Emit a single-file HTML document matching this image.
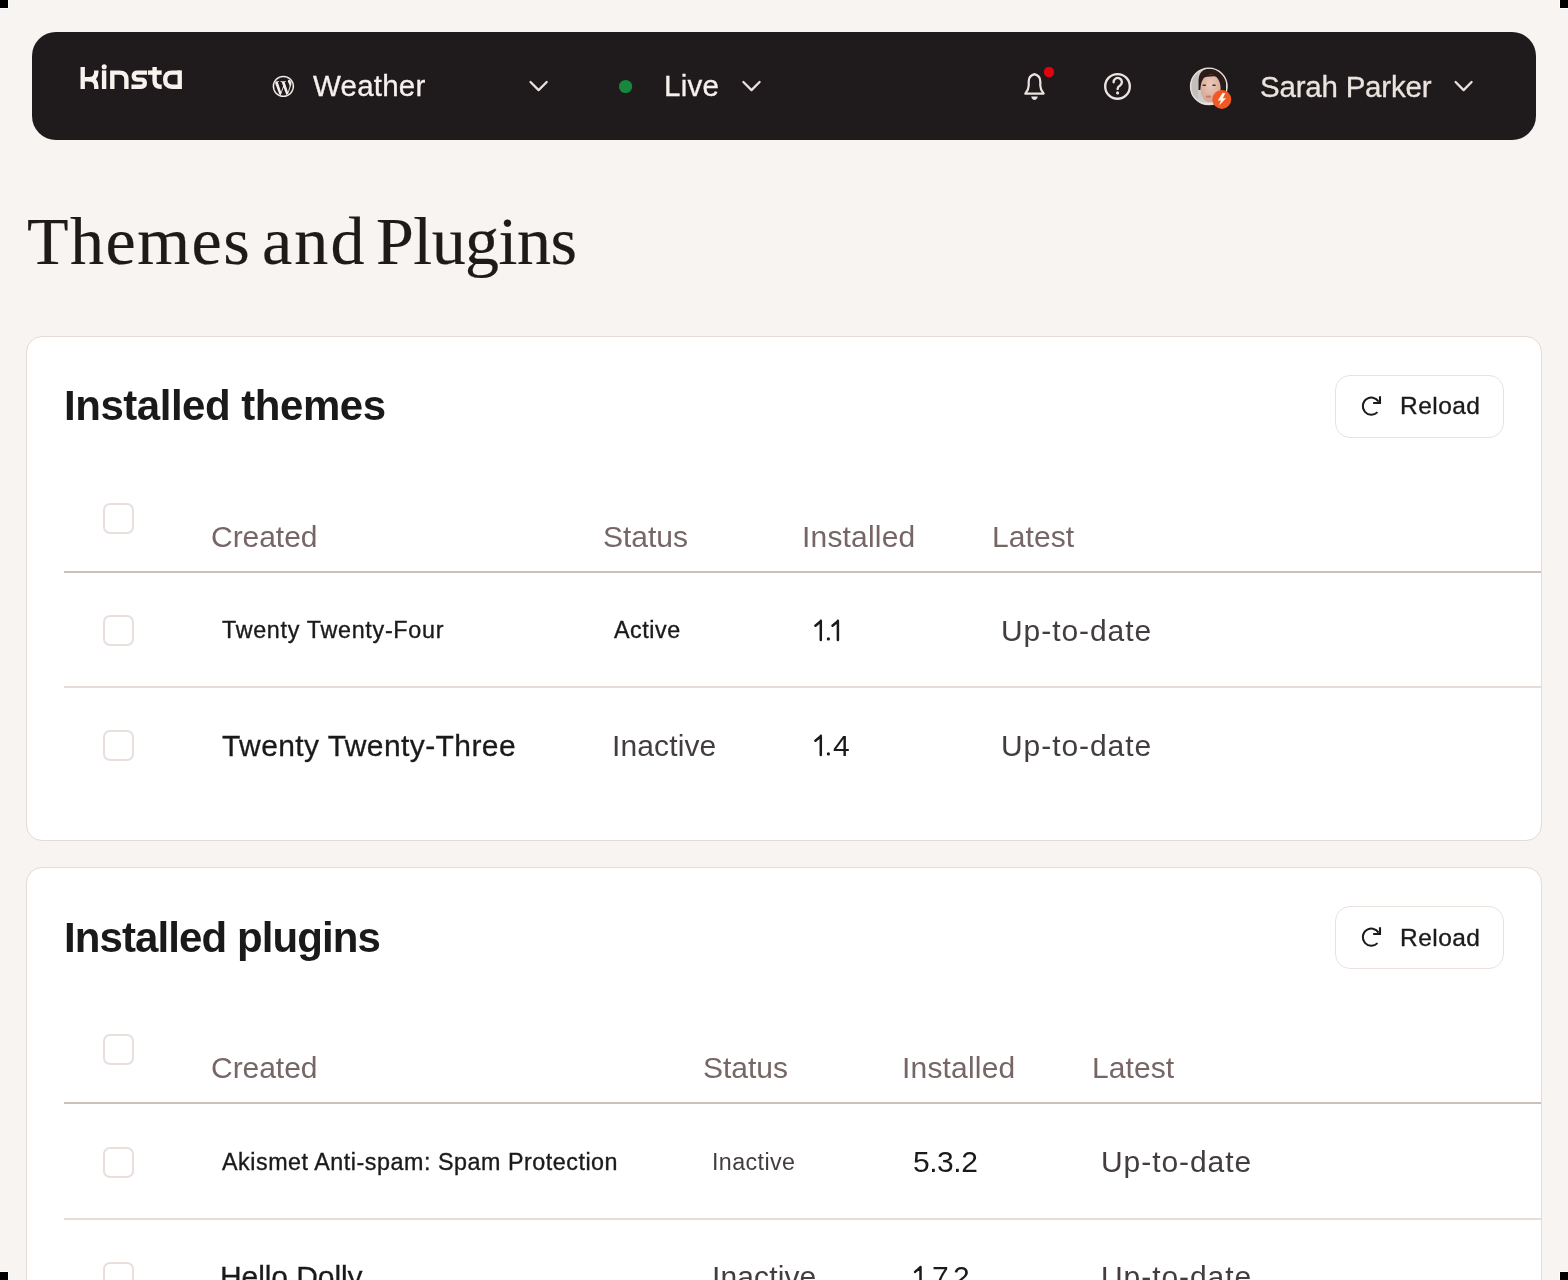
<!DOCTYPE html>
<html>
<head>
<meta charset="utf-8">
<style>
html,body{margin:0;padding:0;}
body{width:1568px;height:1280px;overflow:hidden;position:relative;background:#f8f4f1;font-family:"Liberation Sans",sans-serif;}
.a{position:absolute;}
.t{position:absolute;line-height:1;white-space:nowrap;will-change:transform;}
.nav{left:32px;top:32px;width:1504px;height:108px;border-radius:24px;background:#1f1b1c;}
.card{background:#fff;border:1px solid #e4dbd7;border-radius:16px;box-sizing:border-box;}
.cb{width:31px;height:31px;box-sizing:border-box;border:2px solid #e8dfdb;border-radius:7px;background:#fff;}
.hl{height:2px;background:#cdbfba;}
.rl{height:2px;background:#e6dbd6;}
.h{font-size:28px;color:#6f6161;}
.btn{width:169px;height:63px;box-sizing:border-box;border:1.5px solid #ebe1dd;border-radius:15px;background:#fff;}
.mark{position:absolute;width:8px;height:8px;background:#000;}
</style>
</head>
<body>
<!-- corner marks -->
<div class="mark" style="left:0;top:0;box-shadow:1px 1px 0 #fff"></div>
<div class="mark" style="right:0;top:0;box-shadow:-1px 1px 0 #fff"></div>
<div class="mark" style="left:0;bottom:0;box-shadow:1px -1px 0 #fff"></div>
<div class="mark" style="right:0;bottom:0;box-shadow:-1px -1px 0 #fff"></div>

<!-- NAV -->
<div class="a nav"></div>
<svg class="a" style="left:0;top:0" width="1568" height="140" viewBox="0 0 1568 140">
  <!-- kinsta logo -->
  <g fill="#f8f2ef" stroke="none">
    <rect x="80.5" y="67" width="4.4" height="22"/>
    <rect x="101.9" y="70.4" width="4.4" height="18.6"/>
    <circle cx="104.2" cy="66.7" r="2.55"/>
    <rect x="177.5" y="70.4" width="4.4" height="18.6"/>
  </g>
  <g fill="none" stroke="#f8f2ef" stroke-width="4.4" stroke-linecap="butt">
    <path d="M96.3 70.4 V71.8 Q96.3 79.2 89 79.2 H84.5"/>
    <path d="M88.5 79.2 H89 Q96.3 79.2 96.3 86.5 V89"/>
    <path d="M112.3 89 V72.6 H119.6 Q126.4 72.6 126.4 79.4 V89"/>
    <path d="M147.1 72.6 H137.5 Q133.8 72.6 133.8 76.1 Q133.8 79.6 137.5 79.6 H141.1 Q144.8 79.6 144.8 83.1 Q144.8 86.7 141.1 86.7 H131.4"/>
    <path d="M154.6 67 V80.7 Q154.6 86.7 160.6 86.7 H161.7"/>
    <path d="M148 72.6 H161.7"/>
    <path d="M179.7 72.6 H172 Q165.2 72.6 165.2 79.6 Q165.2 86.7 172 86.7 H179.7"/>
  </g>
  <!-- wordpress icon -->
  <g transform="translate(272.7 75.7) scale(0.17426)"><circle cx="61.26" cy="61.26" r="52.3" fill="#f3eeeb"/><g fill="#1f1b1c">
<path d="M8.708 61.26c0 20.802 12.089 38.779 29.619 47.298L13.258 39.872a52.354 52.354 0 0 0-4.55 21.388z"/>
<path d="M96.74 58.608c0-6.495-2.333-10.993-4.334-14.494-2.664-4.329-5.161-7.995-5.161-12.324 0-4.831 3.664-9.328 8.825-9.328.233 0 .454.029.681.042-9.350-8.566-21.807-13.796-35.489-13.796-18.360 0-34.513 9.420-43.910 23.688 1.233.037 2.395.063 3.382.063 5.497 0 14.006-.667 14.006-.667 2.833-.167 3.167 3.994.337 4.329 0 0-2.847.335-6.015.501L48.2 93.547l11.501-34.493-8.188-22.434c-2.830-.166-5.511-.501-5.511-.501-2.832-.166-2.500-4.496.332-4.329 0 0 8.679.667 13.843.667 5.496 0 14.006-.667 14.006-.667 2.835-.167 3.168 3.994.337 4.329 0 0-2.853.335-6.015.501l18.992 56.494 5.242-17.517c2.272-7.269 4.001-12.490 4.001-16.989z"/>
<path d="M62.184 65.857l-15.768 45.819a52.552 52.552 0 0 0 14.846 2.141c6.120 0 11.989-1.058 17.452-2.979a4.615 4.615 0 0 1-.374-.724L62.184 65.857z"/>
<path d="M107.376 36.046a40.350 40.350 0 0 1 .354 5.400c0 5.333-.996 11.328-3.996 18.824l-16.053 46.413c15.624-9.111 26.133-26.038 26.133-45.426.001-9.137-2.333-17.729-6.438-25.211z"/>

</g></g>
  <circle cx="283.37" cy="86.37" r="10.05" fill="none" stroke="#f3eeeb" stroke-width="1.35"/>
  <!-- chevrons -->
  <g fill="none" stroke="#e9e1dd" stroke-width="2.3" stroke-linecap="round" stroke-linejoin="round">
    <path d="M530.5 82 L538.6 90.1 L546.7 82"/>
    <path d="M743.4 82 L751.5 90.1 L759.6 82"/>
    <path d="M1455.6 82 L1463.6 90.1 L1471.6 82"/>
  </g>
  <!-- live dot -->
  <circle cx="625.6" cy="86.5" r="6.6" fill="#16873c"/>
  <!-- bell -->
  <g fill="none" stroke="#ece4e0" stroke-width="2.2" stroke-linejoin="round" stroke-linecap="round">
    <path d="M1025.3 93.6 H1043.7 Q1040.3 89.6 1040.3 85.8 V81.6 Q1040.3 75.6 1034.5 74.1 Q1028.7 75.6 1028.7 81.6 V85.8 Q1028.7 89.6 1025.3 93.6 Z"/>
  </g>
  <path d="M1031.2 96.6 H1037.8 Q1037.0 100.0 1034.5 100.0 Q1032.0 100.0 1031.2 96.6 Z" fill="#ece4e0"/>
  <circle cx="1049" cy="72" r="5.15" fill="#e1040e"/>
  <!-- help -->
  <circle cx="1117.5" cy="86.4" r="12.3" fill="none" stroke="#ece4e0" stroke-width="2.35"/>
  <path d="M1113.6 82.3 A4.15 4.15 0 1 1 1120.1 85.5 Q1117.6 86.8 1117.6 88.9" fill="none" stroke="#ece4e0" stroke-width="2.35" stroke-linecap="round"/>
  <circle cx="1117.6" cy="92.9" r="1.55" fill="#ece4e0"/>
  <!-- avatar -->
  <defs>
    <clipPath id="av"><circle cx="1208.8" cy="86.4" r="18.3"/></clipPath>
    <radialGradient id="skin" cx="0.5" cy="0.35" r="0.6">
      <stop offset="0" stop-color="#ecc9bb"/>
      <stop offset="1" stop-color="#d7a797"/>
    </radialGradient>
  </defs>
  <g clip-path="url(#av)">
    <rect x="1189" y="67" width="40" height="40" fill="#cfcbc8"/>
    <rect x="1189" y="67" width="9" height="40" fill="#c2bebb"/>
    <path d="M1198.5 90 V80 Q1199 68.5 1211 68.5 Q1226 68.5 1226 82 V94 L1220 94 Q1221 80 1211 76 Q1202 77.5 1201 86 L1200.5 90 Z" fill="#2b1c18"/>
    <ellipse cx="1210.6" cy="88.6" rx="10" ry="14.2" fill="url(#skin)"/>
    <path d="M1200 77.5 Q1206 73.5 1212 74.5 Q1219 74 1222 79 Q1218 75.5 1211 76.6 Q1204 76.5 1200 80 Z" fill="#2b1c18"/>
    <rect x="1202.5" y="84.6" width="3.6" height="1.3" rx="0.6" fill="#4a3530"/>
    <rect x="1212.2" y="84.6" width="3.6" height="1.3" rx="0.6" fill="#4a3530"/>
    <ellipse cx="1208.5" cy="96.6" rx="2.9" ry="1.2" fill="#c57a72"/>
    <rect x="1196" y="102.5" width="26" height="6" fill="#e9e2de"/>
  </g>
  <circle cx="1208.8" cy="86.4" r="18.25" fill="none" stroke="#e6e0dd" stroke-width="1.4"/>
  <circle cx="1221.8" cy="99.4" r="9.5" fill="#f05a22"/>
  <path d="M1222.6 93.0 L1217.8 100.4 H1220.9 L1219.1 105.4 L1226.0 98.3 H1222.9 L1225.3 93.0 Z" fill="#fff6f0"/>
</svg>

<!-- TITLE -->

<!-- CARD 1 -->
<div class="a card" style="left:26px;top:336px;width:1516px;height:505px"></div>
<div class="a btn" style="left:1335px;top:375px"></div>
<svg class="a" style="left:1356px;top:392px" width="30" height="28" viewBox="1356 392 30 28">
  <path d="M1378.6 401.6 A8.55 8.55 0 1 0 1377.5 412.1" fill="none" stroke="#1b1a1a" stroke-width="2"/>
  <path d="M1374.2 403.05 H1380 V397.4" fill="none" stroke="#1b1a1a" stroke-width="2.1" stroke-linecap="square"/>
</svg>

<div class="a cb" style="left:103px;top:502.5px"></div>
<div class="a hl" style="left:64px;top:571px;width:1477px"></div>

<div class="a cb" style="left:103px;top:615px"></div>
<div class="a rl" style="left:64px;top:686px;width:1477px"></div>

<div class="a cb" style="left:103px;top:730px"></div>

<!-- CARD 2 -->
<div class="a card" style="left:26px;top:867px;width:1516px;height:440px"></div>
<div class="a btn" style="left:1335px;top:906px"></div>
<svg class="a" style="left:1356px;top:923px" width="30" height="28" viewBox="1356 392 30 28">
  <path d="M1378.6 401.6 A8.55 8.55 0 1 0 1377.5 412.1" fill="none" stroke="#1b1a1a" stroke-width="2"/>
  <path d="M1374.2 403.05 H1380 V397.4" fill="none" stroke="#1b1a1a" stroke-width="2.1" stroke-linecap="square"/>
</svg>

<div class="a cb" style="left:103px;top:1034px"></div>
<div class="a hl" style="left:64px;top:1102px;width:1477px"></div>

<div class="a cb" style="left:103px;top:1146.5px"></div>
<div class="a rl" style="left:64px;top:1217.5px;width:1477px"></div>

<div class="a cb" style="left:103px;top:1261.5px"></div>
<div class="t" style="left:312.58px;top:71.00px;font-size:29.5px;color:#f6f1ee;letter-spacing:0.22px;-webkit-text-stroke:0.3px #f6f1ee;">Weather</div>
<div class="t" style="left:663.62px;top:71.00px;font-size:29.5px;color:#f6f1ee;letter-spacing:0.27px;-webkit-text-stroke:0.3px #f6f1ee;">Live</div>
<div class="t" style="left:1260.12px;top:72.00px;font-size:29.5px;color:#ebe3de;letter-spacing:-0.21px;-webkit-text-stroke:0.3px #ebe3de;">Sarah Parker</div>
<div class="t" style="left:26.73px;top:207.00px;font-size:68px;color:#1d1a1a;letter-spacing:1.5px;font-family:'Liberation Serif',serif;-webkit-text-stroke:0.2px #1d1a1a;">Themes</div>
<div class="t" style="left:262.09px;top:207.00px;font-size:68px;color:#1d1a1a;letter-spacing:2.15px;font-family:'Liberation Serif',serif;-webkit-text-stroke:0.2px #1d1a1a;">and</div>
<div class="t" style="left:376.40px;top:207.00px;font-size:68px;color:#1d1a1a;letter-spacing:-0.53px;font-family:'Liberation Serif',serif;-webkit-text-stroke:0.2px #1d1a1a;">Plugins</div>
<div class="t" style="left:64.05px;top:385.00px;font-size:42px;color:#1b1a1a;letter-spacing:-0.47px;font-weight:bold;">Installed themes</div>
<div class="t" style="left:1400.06px;top:394.00px;font-size:24.5px;color:#1b1a1a;letter-spacing:0.46px;-webkit-text-stroke:0.35px #1b1a1a;">Reload</div>
<div class="t" style="left:211.10px;top:522.00px;font-size:30px;color:#766666;letter-spacing:-0.04px;">Created</div>
<div class="t" style="left:603.12px;top:522.00px;font-size:30px;color:#766666;">Status</div>
<div class="t" style="left:801.75px;top:522.00px;font-size:30px;color:#766666;letter-spacing:0.19px;">Installed</div>
<div class="t" style="left:991.70px;top:522.00px;font-size:30px;color:#766666;letter-spacing:0.08px;">Latest</div>
<div class="t" style="left:64.05px;top:917.00px;font-size:42px;color:#1b1a1a;letter-spacing:-0.9px;font-weight:bold;">Installed plugins</div>
<div class="t" style="left:1400.06px;top:926.00px;font-size:24.5px;color:#1b1a1a;letter-spacing:0.46px;-webkit-text-stroke:0.35px #1b1a1a;">Reload</div>
<div class="t" style="left:211.10px;top:1053.00px;font-size:30px;color:#766666;letter-spacing:-0.04px;">Created</div>
<div class="t" style="left:703.02px;top:1053.00px;font-size:30px;color:#766666;">Status</div>
<div class="t" style="left:901.65px;top:1053.00px;font-size:30px;color:#766666;letter-spacing:0.19px;">Installed</div>
<div class="t" style="left:1091.70px;top:1053.00px;font-size:30px;color:#766666;letter-spacing:0.08px;">Latest</div>
<div class="t" style="left:221.50px;top:619.00px;font-size:23.3px;color:#1b1a1a;letter-spacing:0.71px;-webkit-text-stroke:0.35px #1b1a1a;">Twenty Twenty-Four</div>
<div class="t" style="left:614.00px;top:619.00px;font-size:23.3px;color:#1b1a1a;letter-spacing:0.55px;-webkit-text-stroke:0.35px #1b1a1a;">Active</div>
<div class="t" style="left:1001.45px;top:616.00px;font-size:30px;color:#433d3d;letter-spacing:0.94px;">Up-to-date</div>
<div class="t" style="left:221.58px;top:731.00px;font-size:30px;color:#1b1a1a;letter-spacing:0.41px;-webkit-text-stroke:0.3px #1b1a1a;">Twenty Twenty-Three</div>
<div class="t" style="left:611.55px;top:731.00px;font-size:30px;color:#433d3d;letter-spacing:0.13px;">Inactive</div>
<div class="t" style="left:833.48px;top:731.00px;font-size:30px;color:#1b1a1a;">4</div>
<div class="t" style="left:1001.45px;top:731.00px;font-size:30px;color:#433d3d;letter-spacing:0.94px;">Up-to-date</div>
<div class="t" style="left:222.00px;top:1151.00px;font-size:23.3px;color:#1b1a1a;letter-spacing:0.53px;-webkit-text-stroke:0.35px #1b1a1a;">Akismet Anti-spam: Spam Protection</div>
<div class="t" style="left:712.18px;top:1151.00px;font-size:23.3px;color:#433d3d;letter-spacing:0.39px;">Inactive</div>
<div class="t" style="left:912.85px;top:1147.00px;font-size:30px;color:#1b1a1a;letter-spacing:-0.45px;">5.3.2</div>
<div class="t" style="left:1101.45px;top:1147.00px;font-size:30px;color:#433d3d;letter-spacing:0.94px;">Up-to-date</div>
<div class="t" style="left:220.20px;top:1262.00px;font-size:30px;color:#1b1a1a;letter-spacing:-0.08px;-webkit-text-stroke:0.3px #1b1a1a;">Hello Dolly</div>
<div class="t" style="left:711.55px;top:1262.00px;font-size:30px;color:#433d3d;letter-spacing:0.13px;">Inactive</div>
<div class="t" style="left:931.70px;top:1262.00px;font-size:30px;color:#1b1a1a;">7</div>
<div class="t" style="left:952.70px;top:1262.00px;font-size:30px;color:#1b1a1a;">2</div>
<div class="t" style="left:1101.45px;top:1262.00px;font-size:30px;color:#433d3d;letter-spacing:0.94px;">Up-to-date</div>
<svg class="a" style="left:0;top:0" width="1568" height="1280"><path d="M820.80 620.80 V639.90 M815.40 625.80 L820.80 621.20" stroke="#1b1a1a" stroke-width="2.5" stroke-linecap="round" fill="none"/><circle cx="828.4" cy="638.9" r="1.65" fill="#1b1a1a"/><path d="M837.90 620.80 V639.90 M832.50 625.80 L837.90 621.20" stroke="#1b1a1a" stroke-width="2.5" stroke-linecap="round" fill="none"/><path d="M820.80 735.80 V754.90 M815.40 740.80 L820.80 736.20" stroke="#1b1a1a" stroke-width="2.5" stroke-linecap="round" fill="none"/><circle cx="828.4" cy="753.9" r="1.65" fill="#1b1a1a"/><path d="M920.50 1266.90 V1286.00 M915.10 1271.90 L920.50 1267.30" stroke="#1b1a1a" stroke-width="2.5" stroke-linecap="round" fill="none"/><circle cx="928.1" cy="1285" r="1.65" fill="#1b1a1a"/><circle cx="949.5" cy="1285" r="1.65" fill="#1b1a1a"/></svg>
</body>
</html>
